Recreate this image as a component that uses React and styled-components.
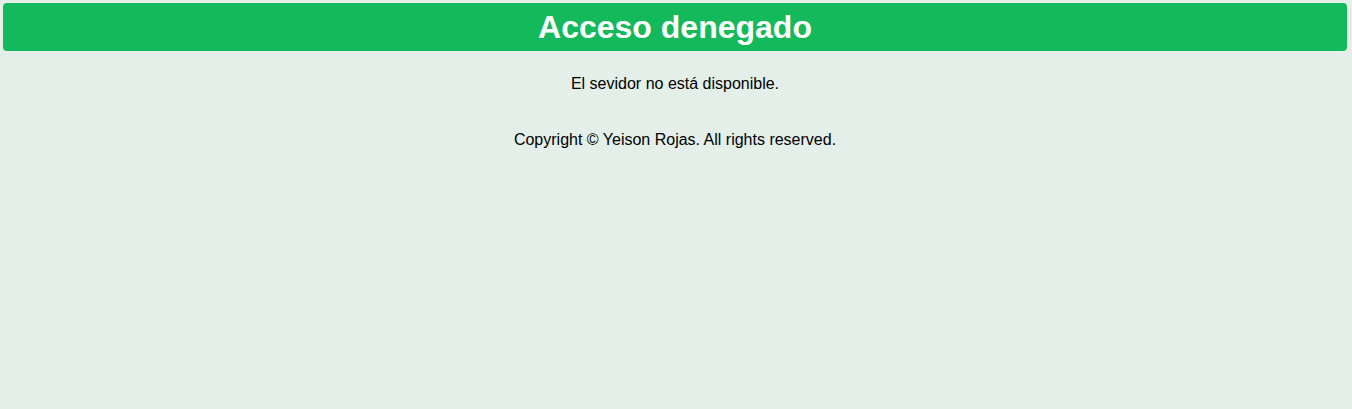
import React from "react";
import styled, { createGlobalStyle } from "styled-components";

const Global = createGlobalStyle`
  html, body { margin: 0; padding: 0; }
  body {
    background: #e4efea;
    font-family: "Liberation Sans", Arial, sans-serif;
    color: #000;
    min-height: 100vh;
  }
`;

const Page = styled.div`
  padding: 3px 5px 0 3px;
`;

const Header = styled.header`
  background: #13b95a;
  border-radius: 4px;
  height: 48px;
  display: flex;
  align-items: center;
  justify-content: center;
`;

const Title = styled.h1`
  margin: 0;
  color: #fff;
  font-size: 32px;
  font-weight: bold;
  line-height: 37px;
`;

const Message = styled.p`
  margin: 24px 0 0;
  text-align: center;
  font-size: 16px;
  line-height: 18px;
`;

const Footer = styled.footer`
  margin-top: 38px;
  text-align: center;
  font-size: 16px;
  line-height: 18px;
`;

export default function App() {
  return (
    <>
      <Global />
      <Page>
        <Header>
          <Title>Acceso denegado</Title>
        </Header>
        <Message>El sevidor no está disponible.</Message>
        <Footer>Copyright © Yeison Rojas. All rights reserved.</Footer>
      </Page>
    </>
  );
}
